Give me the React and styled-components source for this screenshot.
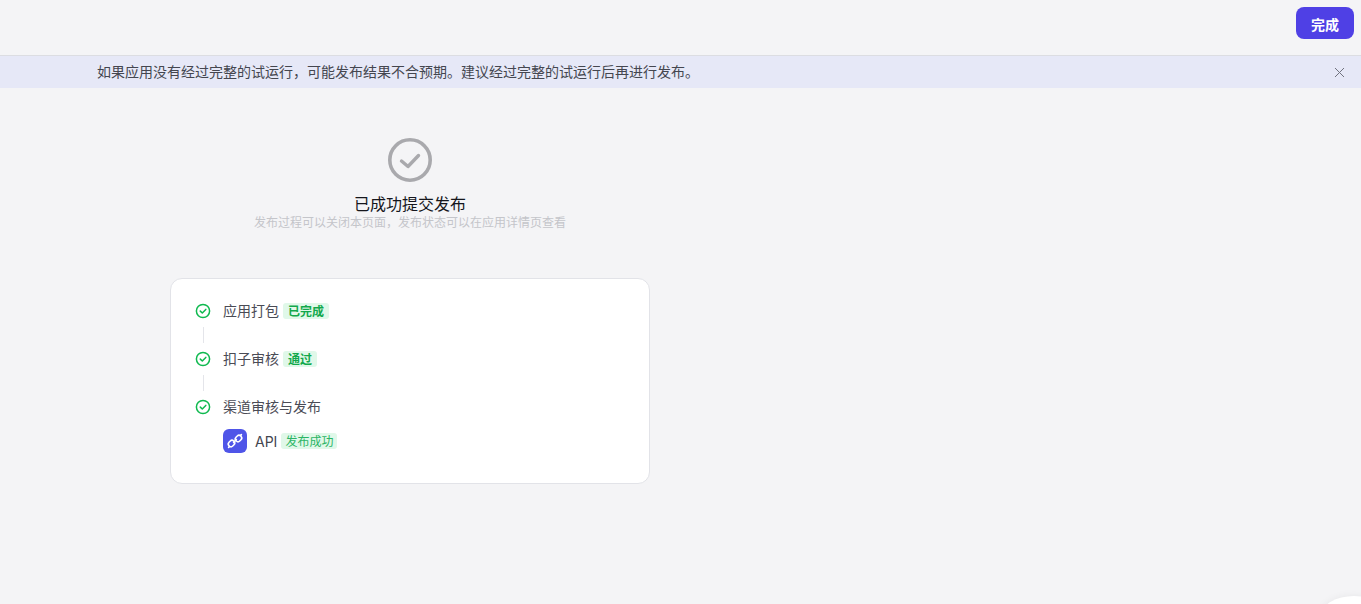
import styled, { createGlobalStyle } from "styled-components";

const GlobalStyle = createGlobalStyle`
    html, body {
        margin: 0;
        padding: 0;
        height: 100%;
        overflow: hidden;
        background: #f4f4f6;
        font-family: Inter, "Noto Sans CJK SC", sans-serif;
    }
`;

const Page = styled.div`
    position: relative;
    height: 604px;
    overflow: hidden;
    background: #f4f4f6;
`;
const Header = styled.header`
    box-sizing: border-box;
    height: 56px;
    display: flex;
    justify-content: flex-end;
    align-items: flex-start;
    padding: 7px 7px 0 0;
    border-bottom: 1px solid #dcdde2;
`;
const DoneButton = styled.button`
    width: 58px;
    height: 32px;
    border: none;
    border-radius: 8px;
    background: #4f40e5;
    color: #fff;
    font-family: inherit;
    font-size: 14px;
    font-weight: 600;
    padding: 2px 0 0;
`;
const Banner = styled.div`
    height: 32px;
    display: flex;
    align-items: center;
    justify-content: space-between;
    padding: 0 16px 0 97px;
    background: #e6e8f7;
    color: #44464f;
    font-size: 14px;
    line-height: 32px;
`;
const CloseBtn = styled.span`
    display: flex;
    color: #71737f;
`;
const Content = styled.main`
    width: 480px;
    margin-left: 170px;
    padding-top: 50px;
`;
const Result = styled.div`
    display: flex;
    flex-direction: column;
    align-items: center;
`;
const Title = styled.div`
    margin-top: 12px;
    font-size: 16px;
    line-height: 20px;
    font-weight: 400;
    color: #15161c;
`;
const Subtitle = styled.div`
    font-size: 12px;
    line-height: 18px;
    color: #c4c5ca;
`;
const Card = styled.section`
    box-sizing: border-box;
    height: 206px;
    margin-top: 46px;
    padding: 23px 24px 0;
    background: #fff;
    border: 1px solid #e2e3e8;
    border-radius: 12px;
`;
const Step = styled.div`
    display: flex;
    align-items: center;
    height: 18px;
    font-size: 14px;
    line-height: 18px;
    color: #4a4b55;
`;
const StepIcon = styled.span`
    display: flex;
    width: 16px;
    margin-right: 12px;
`;
const Connector = styled.div`
    width: 1px;
    height: 16px;
    margin: 7px 0 7px 8px;
    background: #e4e5ea;
`;
const Tag = styled.span`
    display: inline-block;
    height: 16px;
    margin-left: 4px;
    padding: 0 ${props => props.$bold ? 5 : 4}px;
    border-radius: 3px;
    background: #e0f8e9;
    color: ${props => props.$bold ? "#12a84c" : "#2cb565"};
    font-size: 12px;
    font-weight: ${props => props.$bold ? 600 : 400};
    line-height: 18px;
`;
const Channel = styled.div`
    display: flex;
    align-items: center;
    margin: 13px 0 0 28px;
    font-size: 14px;
    line-height: 22px;
    color: #44464f;
`;
const ChannelIcon = styled.span`
    display: flex;
    align-items: center;
    justify-content: center;
    width: 24px;
    height: 24px;
    margin-right: 8px;
    border-radius: 6px;
    background: #4f55e8;
`;
const ChannelName = styled.span`
    padding-top: 2px;
`;
const CornerBubble = styled.div`
    position: absolute;
    right: -26px;
    bottom: -32px;
    width: 66px;
    height: 40px;
    border-radius: 50%;
    background: #fff;
    box-shadow: 0 0 8px rgba(0, 0, 0, 0.06);
`;

const CheckIcon = () => (
    <svg width="16" height="16" viewBox="0 0 16 16" fill="none" stroke="#0fb94f" strokeWidth="1.5" strokeLinecap="round" strokeLinejoin="round">
        <circle cx="8" cy="8" r="6.6" />
        <path d="M5.3 8.1 7.3 10 10.8 6.4" />
    </svg>
);

const App = () => {
    return (
        <Page>
            <GlobalStyle />
            <Header>
                <DoneButton>完成</DoneButton>
            </Header>
            <Banner>
                <span>如果应用没有经过完整的试运行，可能发布结果不合预期。建议经过完整的试运行后再进行发布。</span>
                <CloseBtn>
                    <svg width="11" height="11" viewBox="0 0 11 11" fill="none" stroke="currentColor" strokeWidth="1">
                        <path d="M1 1 10 10M10 1 1 10" />
                    </svg>
                </CloseBtn>
            </Banner>
            <Content>
                <Result>
                    <svg width="44" height="44" viewBox="0 0 44 44" fill="none" stroke="#a9a9ad" strokeLinecap="round" strokeLinejoin="round">
                        <circle cx="22" cy="22" r="20.2" strokeWidth="3.6" />
                        <path d="M13.5 23 20 28.5 30.5 17.5" strokeWidth="3.4" />
                    </svg>
                    <Title>已成功提交发布</Title>
                    <Subtitle>发布过程可以关闭本页面，发布状态可以在应用详情页查看</Subtitle>
                </Result>
                <Card>
                    <Step>
                        <StepIcon><CheckIcon /></StepIcon>
                        应用打包<Tag $bold>已完成</Tag>
                    </Step>
                    <Connector />
                    <Step>
                        <StepIcon><CheckIcon /></StepIcon>
                        扣子审核<Tag $bold>通过</Tag>
                    </Step>
                    <Connector />
                    <Step>
                        <StepIcon><CheckIcon /></StepIcon>
                        渠道审核与发布
                    </Step>
                    <Channel>
                        <ChannelIcon>
                            <svg width="18" height="18" viewBox="0 0 18 18" fill="none" stroke="#fff" strokeWidth="1.6" strokeLinecap="round">
                                <rect x="2.2" y="8.9" width="6.6" height="5.2" rx="2.4" transform="rotate(-45 5.5 11.5)" />
                                <rect x="9.2" y="3.9" width="6.6" height="5.2" rx="2.4" transform="rotate(-45 12.5 6.5)" />
                                <path d="M7.6 10.4 10.4 7.6M2.6 15.4 3.4 14.6M14.6 3.4 15.4 2.6" />
                            </svg>
                        </ChannelIcon>
                        <ChannelName>API</ChannelName><Tag>发布成功</Tag>
                    </Channel>
                </Card>
            </Content>
            <CornerBubble />
        </Page>
    );
};

export default App;
